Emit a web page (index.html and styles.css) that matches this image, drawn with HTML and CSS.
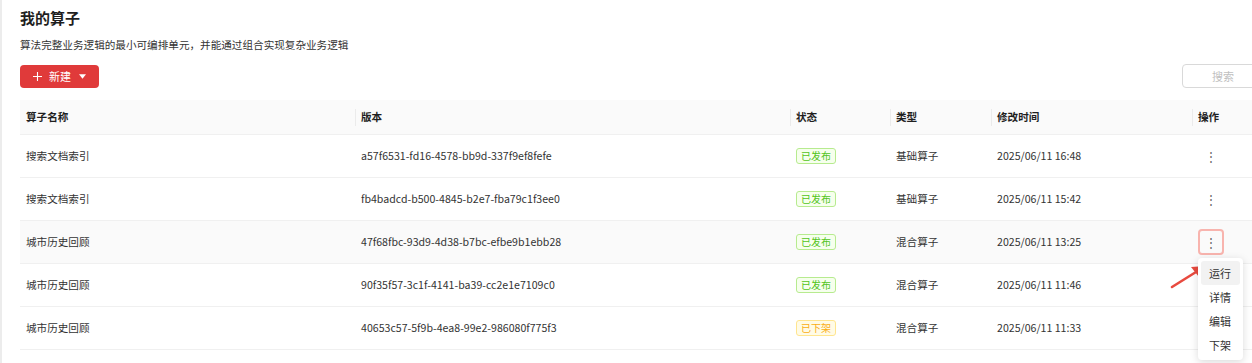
FILE: index.html
```html
<!DOCTYPE html>
<html>
<head>
    <title>我的算子</title>
    <meta charset="UTF-8">
    <link rel="stylesheet" href="styles.css">
</head>
<body>
    <div class="page">
        <div class="content">
            <h1>我的算子</h1>
            <p class="desc">算法完整业务逻辑的最小可编排单元，并能通过组合实现复杂业务逻辑</p>

            <div class="toolbar">
                <button class="btn-new">
                    <svg class="icon-plus" width="9" height="9" viewBox="0 0 10 10"><path d="M5 0v10M0 5h10" stroke="#fff" stroke-width="1.2"/></svg>
                    <span>新建</span>
                    <svg class="icon-caret" width="7" height="5" viewBox="0 0 8 5"><path d="M0 0h8L4 5z" fill="#fff"/></svg>
                </button>
                <button class="btn-search" disabled>搜索</button>
            </div>

            <table class="op-table">
                <colgroup>
                    <col style="width:335px">
                    <col style="width:435px">
                    <col style="width:100px">
                    <col style="width:101px">
                    <col style="width:201px">
                    <col style="width:68px">
                </colgroup>
                <thead>
                    <tr>
                        <th>算子名称</th>
                        <th><span class="sep"></span>版本</th>
                        <th><span class="sep"></span>状态</th>
                        <th><span class="sep"></span>类型</th>
                        <th><span class="sep"></span>修改时间</th>
                        <th><span class="sep"></span>操作</th>
                    </tr>
                </thead>
                <tbody>
                    <tr>
                        <td>搜索文档索引</td>
                        <td>a57f6531-fd16-4578-bb9d-337f9ef8fefe</td>
                        <td><span class="tag tag-on">已发布</span></td>
                        <td>基础算子</td>
                        <td>2025/06/11 16:48</td>
                        <td><span class="more">⋮</span></td>
                    </tr>
                    <tr>
                        <td>搜索文档索引</td>
                        <td>fb4badcd-b500-4845-b2e7-fba79c1f3ee0</td>
                        <td><span class="tag tag-on">已发布</span></td>
                        <td>基础算子</td>
                        <td>2025/06/11 15:42</td>
                        <td><span class="more">⋮</span></td>
                    </tr>
                    <tr class="hover">
                        <td>城市历史回顾</td>
                        <td>47f68fbc-93d9-4d38-b7bc-efbe9b1ebb28</td>
                        <td><span class="tag tag-on">已发布</span></td>
                        <td>混合算子</td>
                        <td>2025/06/11 13:25</td>
                        <td class="ops-cell">
                            <span class="more active">⋮</span>
                            <ul class="menu">
                                <li class="current">运行</li>
                                <li>详情</li>
                                <li>编辑</li>
                                <li>下架</li>
                            </ul>
                            <svg class="pointer" width="40" height="26" viewBox="0 0 40 26">
                                <path d="M2 24L26 9" stroke="#e84a3f" stroke-width="2.6" stroke-linecap="round"/>
                                <path d="M36 3L21 4L29 14z" fill="#e84a3f"/>
                            </svg>
                        </td>
                    </tr>
                    <tr>
                        <td>城市历史回顾</td>
                        <td>90f35f57-3c1f-4141-ba39-cc2e1e7109c0</td>
                        <td><span class="tag tag-on">已发布</span></td>
                        <td>混合算子</td>
                        <td>2025/06/11 11:46</td>
                        <td></td>
                    </tr>
                    <tr>
                        <td>城市历史回顾</td>
                        <td>40653c57-5f9b-4ea8-99e2-986080f775f3</td>
                        <td><span class="tag tag-off">已下架</span></td>
                        <td>混合算子</td>
                        <td>2025/06/11 11:33</td>
                        <td></td>
                    </tr>
                </tbody>
            </table>
        </div>
    </div>
</body>
</html>
```

FILE: styles.css
```css
* {
    margin: 0;
    padding: 0;
    box-sizing: border-box;
}

html, body {
    overflow: hidden;
}

body {
    font-family: "Noto Sans CJK SC", "Noto Sans", sans-serif;
    font-size: 10.6px;
    color: #333;
    background: #fff;
}

.page {
    border-left: 2px solid #ececec;
    height: 363px;
    padding-left: 18px;
    overflow: hidden;
}

.content {
    width: 1240px;
}

h1 {
    font-size: 15px;
    font-weight: 700;
    color: #1f1f1f;
    line-height: 20px;
    padding-top: 8px;
}

.desc {
    margin-top: 9px;
    line-height: 16px;
    color: #333;
}

.toolbar {
    display: flex;
    justify-content: space-between;
    align-items: center;
    margin-top: 11px;
    height: 24px;
}

.btn-new {
    display: flex;
    align-items: center;
    width: 79px;
    height: 23px;
    padding-left: 13px;
    background: #e03a3a;
    color: #fff;
    border: none;
    border-radius: 4px;
    font-family: inherit;
    font-size: 11px;
}

.btn-new .icon-caret {
    margin-left: 8px;
}

.btn-new span {
    margin-left: 7px;
}

.btn-search {
    width: 82px;
    height: 24px;
    background: #fff;
    border: 1px solid #d9d9d9;
    border-radius: 4px;
    color: #bfbfbf;
    font-family: inherit;
    font-size: 11px;
    margin-right: -4px;
}

.op-table {
    margin-top: 12px;
    width: 1240px;
    table-layout: fixed;
    border-collapse: collapse;
}

.op-table th {
    position: relative;
    height: 34px;
    background: #fafafa;
    text-align: left;
    font-weight: 700;
    color: #1f1f1f;
    padding-left: 6px;
    border-bottom: 1px solid #f0f0f0;
}

.sep {
    position: absolute;
    left: 0;
    top: 9px;
    height: 17px;
    border-left: 1px solid #ebebeb;
}

.op-table td {
    height: 43px;
    padding-left: 6px;
    border-bottom: 1px solid #f0f0f0;
    white-space: nowrap;
}

.op-table tr.hover td {
    background: #fafafa;
}

.tag {
    display: inline-block;
    height: 16px;
    line-height: 14px;
    padding: 0 4px;
    font-size: 10px;
    border-radius: 3px;
    border: 1px solid;
}

.tag-on {
    color: #52c41a;
    background: #f6ffed;
    border-color: #b7eb8f;
}

.tag-off {
    color: #faad14;
    background: #fffbe6;
    border-color: #ffe58f;
}

.more {
    display: inline-block;
    width: 26px;
    height: 26px;
    line-height: 22px;
    text-align: center;
    color: #666;
    font-size: 12px;
    border: 2px solid transparent;
    border-radius: 4px;
}

.more.active {
    border-color: #f8b4ae;
}

.ops-cell {
    position: relative;
}

.menu {
    position: absolute;
    left: 6px;
    top: 37px;
    width: 45px;
    padding: 3px;
    list-style: none;
    background: #fff;
    border-radius: 4px;
    box-shadow: 0 2px 8px rgba(0, 0, 0, 0.15);
    z-index: 2;
}

.menu li {
    height: 24px;
    line-height: 24px;
    padding-left: 8px;
    border-radius: 3px;
    font-size: 11px;
    color: #333;
}

.menu li.current {
    background: #f2f2f2;
}

.pointer {
    position: absolute;
    left: -22px;
    top: 42px;
}
```
